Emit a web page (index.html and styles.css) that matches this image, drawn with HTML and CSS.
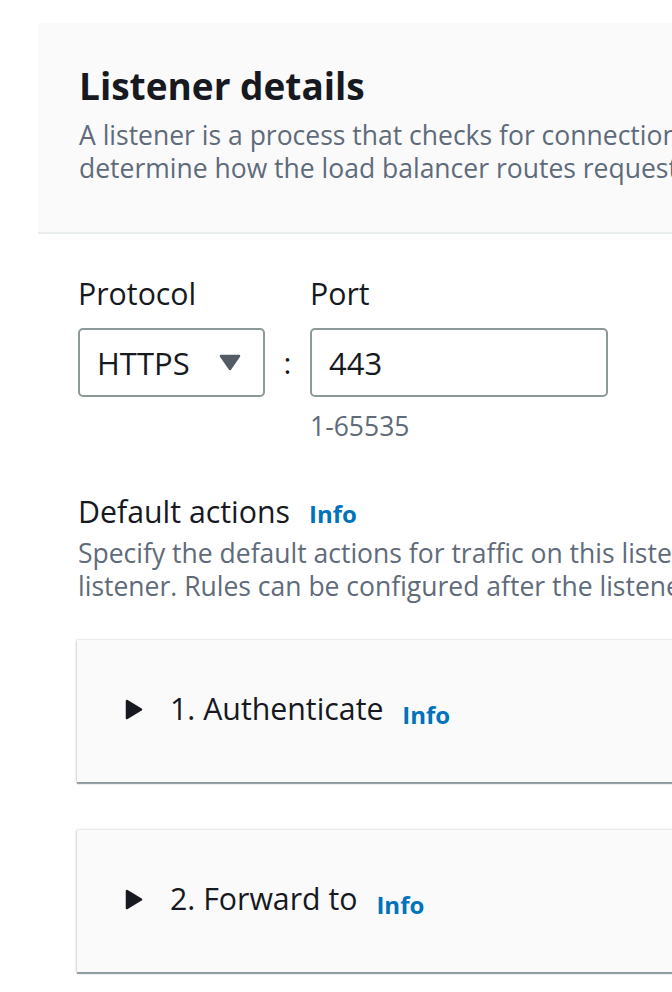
FILE: index.html
```html
<!DOCTYPE html>
<html lang="en">
<head>
<meta charset="utf-8">
<title>Listener details</title>
<link rel="stylesheet" href="styles.css">
</head>
<body>
<div class="page">
  <section class="header-panel">
    <h1 class="title">Listener details</h1>
    <p class="desc">A listener is a process that checks for connection requests using the port and protocol you configure. The rules that you define for a listener<br>determine how the load balancer routes requests to its registered targets.</p>
  </section>

  <div class="content">
    <div class="listener-grid">
      <span class="field-label">Protocol</span>
      <span></span>
      <span class="field-label">Port</span>

      <div class="select">
        <span>HTTPS</span>
        <svg class="caret" width="22" height="17" viewBox="0 0 22 17" aria-hidden="true"><polygon points="2,2 20,2 11,15" fill="#545b64" stroke="#545b64" stroke-width="2.5" stroke-linejoin="round"/></svg>
      </div>
      <span class="colon">:</span>
      <div class="input">443</div>

      <span></span>
      <span></span>
      <span class="hint">1-65535</span>
    </div>

    <div class="section-label">
      <span class="field-label">Default actions</span>
      <a class="info">Info</a>
    </div>
    <p class="desc section-desc">Specify the default actions for traffic on this listener. Default actions apply to traffic that does not meet the conditions of rules on your<br>listener. Rules can be configured after the listener is created.</p>

    <div class="card">
      <div class="card-head">
        <svg class="expand" width="18" height="21" viewBox="0 0 18 21" aria-hidden="true"><polygon points="2,2 16,10.5 2,19" fill="#16191f" stroke="#16191f" stroke-width="2.5" stroke-linejoin="round"/></svg>
        <span class="card-title">1. Authenticate <a class="info card-info">Info</a></span>
      </div>
    </div>

    <div class="card">
      <div class="card-head">
        <svg class="expand" width="18" height="21" viewBox="0 0 18 21" aria-hidden="true"><polygon points="2,2 16,10.5 2,19" fill="#16191f" stroke="#16191f" stroke-width="2.5" stroke-linejoin="round"/></svg>
        <span class="card-title">2. Forward to <a class="info card-info">Info</a></span>
      </div>
    </div>
  </div>
</div>
</body>
</html>
```

FILE: styles.css
```css
html {
  overflow: hidden;
  background: #ffffff;
}

body {
  margin: 0;
  padding: 0 0 16px;
  font-family: "Open Sans", "Noto Sans", sans-serif;
  color: #16191f;
}

.page {
  width: 1100px;
}

.header-panel {
  margin: 23px 0 0 38px;
  padding: 41px 0 47px 41px;
  background: #fafafa;
  border-bottom: 2px solid #eaeded;
}

.title {
  margin: 0;
  font-size: 37px;
  line-height: 44px;
  font-weight: 700;
  color: #16191f;
}

.desc {
  margin: 11px 0 0;
  font-size: 26.5px;
  line-height: 33px;
  color: #5f6b7a;
  white-space: nowrap;
}

.content {
  margin-left: 78px;
  padding-top: 42px;
}

.listener-grid {
  display: grid;
  grid-template-columns: 187px 45px 298px;
}

.field-label {
  font-size: 30.3px;
  line-height: 36px;
  color: #16191f;
}

.listener-grid .field-label {
  margin-bottom: 16px;
}

.select,
.input {
  box-sizing: border-box;
  height: 69px;
  border: 2px solid #8d9999;
  border-radius: 5px;
  font-size: 31px;
  line-height: 36px;
  display: flex;
  align-items: center;
  color: #16191f;
}

.select {
  justify-content: space-between;
  padding: 0 22px 0 17px;
}

.input {
  padding-left: 17px;
}

.colon {
  display: flex;
  align-items: center;
  justify-content: center;
  font-size: 30px;
  line-height: 36px;
}

.hint {
  margin-top: 13px;
  font-size: 26.5px;
  line-height: 33px;
  color: #5f6b7a;
}

.section-label {
  margin-top: 51px;
  display: flex;
  align-items: baseline;
  gap: 19px;
}

.info {
  font-size: 24px;
  font-weight: 700;
  color: #0073bb;
  text-decoration: none;
}

.section-desc {
  margin-top: 7px;
}

.card {
  margin: 36px 0 0 -1px;
  background: #fafafa;
  border-top: 1px solid #eaeded;
  box-shadow: 0 2px 1px 0 rgba(0, 28, 36, 0.35), 1px 1px 2px 0 rgba(0, 28, 36, 0.12), -1px 1px 2px 0 rgba(0, 28, 36, 0.12);
  padding: 51px 0 55px 48px;
}

.card + .card {
  margin-top: 47px;
}

.card-head {
  display: flex;
  align-items: center;
  gap: 27px;
}

.card-title {
  font-size: 30.3px;
  line-height: 36px;
  color: #16191f;
  white-space: nowrap;
}

.card-info {
  margin-left: 11px;
  vertical-align: -4px;
  line-height: 24px;
}
```
